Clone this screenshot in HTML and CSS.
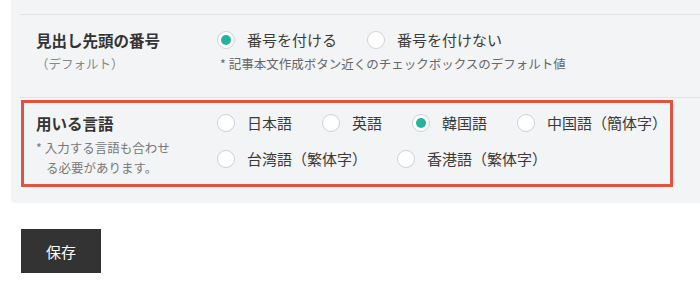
FILE: index.html
```html
<!DOCTYPE html>
<html lang="ja">
<head>
  <meta charset="UTF-8" />
  <meta name="viewport" content="width=device-width, initial-scale=1" />
  <title>設定</title>
  <link rel="stylesheet" href="styles.css">
</head>
<body>

  <!-- 設定パネル -->
  <div class="panel">

    <!-- 見出し先頭の番号 -->
    <div class="row">
      <div class="label">
        <div class="label-title">見出し先頭の番号</div>
        <div class="label-sub">（デフォルト）</div>
      </div>
      <div class="field">
        <div class="radio-line">
          <label class="option"><input type="radio" name="num" checked><span>番号を付ける</span></label>
          <label class="option"><input type="radio" name="num"><span>番号を付けない</span></label>
        </div>
        <div class="note">* 記事本文作成ボタン近くのチェックボックスのデフォルト値</div>
      </div>
    </div>

    <!-- 用いる言語 (赤枠で強調) -->
    <div class="row row-lang">
      <div class="highlight">
        <div class="label">
          <div class="label-title">用いる言語</div>
          <div class="label-note">* 入力する言語も合わせる必要があります。</div>
        </div>
        <div class="field">
          <div class="radio-line">
            <label class="option"><input type="radio" name="lang"><span>日本語</span></label>
            <label class="option"><input type="radio" name="lang"><span>英語</span></label>
            <label class="option"><input type="radio" name="lang" checked><span>韓国語</span></label>
            <label class="option"><input type="radio" name="lang"><span>中国語（簡体字）</span></label>
          </div>
          <div class="radio-line second">
            <label class="option"><input type="radio" name="lang"><span>台湾語（繁体字）</span></label>
            <label class="option"><input type="radio" name="lang"><span>香港語（繁体字）</span></label>
          </div>
        </div>
      </div>
    </div>

  </div>

  <button class="save-btn">保存</button>

</body>
</html>
```

FILE: styles.css
```css
/* Reset */
* {
  box-sizing: border-box;
}

body {
  margin: 0;
  font-family: "Noto Sans CJK JP", "Noto Sans", sans-serif;
  color: #333333;
  background: #ffffff;
}

/* =================
   パネル
   ================= */
.panel {
  margin-left: 11px;
  padding: 14px 0 16px 9px;
  background: #f3f4f6;
  border-radius: 0 0 0 4px;
}

.row {
  display: flex;
  border-top: 1px solid #e1e3e6;
  padding: 13px 0 21px 16px;
}

.row-lang {
  padding: 2px 27px 0 1px;
}

/* 赤い強調枠 */
.highlight {
  display: flex;
  flex: 1;
  border: 3px solid #e0533f;
  padding: 8px 0 6px 12px;
}

/* 左側の見出し */
.label {
  width: 181px;
  flex-shrink: 0;
}

.label-title {
  font-size: 15.5px;
  font-weight: 700;
  line-height: 24px;
}

.label-sub {
  font-size: 12.5px;
  line-height: 24px;
  color: #888888;
}

.label-note {
  margin-top: 3px;
  width: 140px;
  padding-left: 10px;
  text-indent: -10px;
  font-size: 12.5px;
  line-height: 20px;
  color: #777777;
}

/* 右側の入力欄 */
.field {
  flex: 1;
}

.radio-line {
  display: flex;
  column-gap: 30px;
  white-space: nowrap;
}

.radio-line.second {
  margin-top: 12px;
}

.option {
  display: flex;
  align-items: center;
  gap: 12px;
  font-size: 15px;
  line-height: 24px;
  color: #3a3a3a;
}

/* ラジオボタン */
.option input {
  appearance: none;
  -webkit-appearance: none;
  margin: 0;
  width: 18px;
  height: 18px;
  border: 1px solid #cfd1d4;
  border-radius: 50%;
  background: #ffffff;
  display: flex;
  align-items: center;
  justify-content: center;
}

.option input:checked::after {
  content: "";
  width: 10px;
  height: 10px;
  border-radius: 50%;
  background: #22b59b;
}

.note {
  margin-left: 3px;
  font-size: 12.5px;
  line-height: 24px;
  color: #666666;
}

/* 保存ボタン */
.save-btn {
  display: block;
  margin: 26px 0 0 21px;
  width: 80px;
  height: 44px;
  border: none;
  background: #333333;
  color: #ffffff;
  font-family: inherit;
  font-size: 15px;
  cursor: pointer;
}
```
